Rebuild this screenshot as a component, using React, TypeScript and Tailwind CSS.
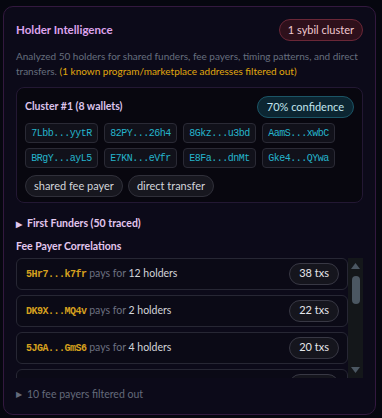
import React from "react";

const wallets = [
  "7Lbb...yytR", "82PY...26h4", "8Gkz...u3bd", "AamS...xwbC",
  "BRgY...ayL5", "E7KN...eVfr", "E8Fa...dnMt", "Gke4...QYwa",
];

const payers = [
  { addr: "5Hr7...k7fr", holders: 12, txs: 38 },
  { addr: "DK9X...MQ4v", holders: 2, txs: 22 },
  { addr: "5JGA...GmS6", holders: 4, txs: 20 },
  { addr: "9xQe...T2pL", holders: 3, txs: 14 },
];

const mono = { fontFamily: '"Liberation Mono", "DejaVu Sans Mono", monospace' };

function FakeScrollbar() {
  return (
    <div className="flex h-[120px] w-[15px] shrink-0 flex-col items-center bg-[#14171a]">
      <svg width="9" height="6" viewBox="0 0 9 6" className="mt-[5px]"><path d="M0 6 L4.5 0 L9 6 Z" fill="#4b5762" /></svg>
      <div className="mt-[7px] h-[28px] w-[8px] rounded-full bg-[#4b5762]" />
      <div className="flex-1" />
      <svg width="9" height="6" viewBox="0 0 9 6" className="mb-[5px]"><path d="M0 0 L9 0 L4.5 6 Z" fill="#4b5762" /></svg>
    </div>
  );
}

export default function App() {
  return (
    <div className="min-h-[418px] w-[382px] bg-[#06070f] pt-[6px] pl-[3px]" style={{ fontFamily: 'Lato, "Noto Sans", sans-serif' }}>
      <div className="w-[373px] rounded-[10px] border border-[#33193f] bg-[#0c0a19] px-3 pt-3 pb-[12px]">
        <div className="flex h-[22px] items-center justify-between">
          <h2 className="text-[11.5px] font-bold text-[#dda3ec]">Holder Intelligence</h2>
          <span className="flex h-[22px] items-center rounded-full border border-[#6a2737] bg-[#2e101b] px-[8px] text-[11px] text-[#f1c9d0]">1 sybil cluster</span>
        </div>

        <p className="mt-[8px] text-[10px] leading-[15px] text-[#666e7e]">
          Analyzed 50 holders for shared funders, fee payers, timing patterns, and direct transfers.{" "}
          <span className="text-[#e0a80e]">(1 known program/marketplace addresses filtered out)</span>
        </p>

        <div className="mt-[8px] rounded-[8px] border border-[#231833] bg-[#08070f] px-2 pt-2 pb-[5px]">
          <div className="flex items-center justify-between">
            <span className="text-[10.5px] font-bold text-[#dcc3eb]">Cluster #1 (8 wallets)</span>
            <span className="flex h-[22px] items-center rounded-full border border-[#1b5566] bg-[#0c2632] px-[9px] text-[11px] text-[#c3e6ef]">70% confidence</span>
          </div>
          <div className="mt-[5px] grid grid-cols-[repeat(4,max-content)] gap-x-[6px] gap-y-[5px]">
            {wallets.map(w => (
              <span key={w} className="flex h-[20px] w-[73px] items-center justify-center rounded-[4px] border border-[#2a2a35] bg-[#11111a] text-[10px] tracking-[-0.5px] text-[#25b4cc]" style={mono}>{w}</span>
            ))}
          </div>
          <div className="mt-[7px] flex gap-[5px]">
            {["shared fee payer", "direct transfer"].map(t => (
              <span key={t} className="flex h-[22px] items-center rounded-full border border-[#30303a] bg-[#17171f] px-[8px] text-[11px] text-[#d3d5db]">{t}</span>
            ))}
          </div>
        </div>

        <div className="mt-[13px] flex items-center gap-[5px] text-[10.5px] font-bold text-[#e3c7ef]">
          <span className="text-[8px]">▶</span>
          <span>First Funders (50 traced)</span>
        </div>

        <h3 className="mt-[7px] text-[10.5px] font-bold text-[#e3c7ef]">Fee Payer Correlations</h3>

        <div className="mt-[3px] flex">
          <div className="h-[120px] flex-1 overflow-hidden">
            <div className="flex flex-col gap-[5px]">
              {payers.map(p => (
                <div key={p.addr} className="flex h-[32px] items-center justify-between rounded-[6px] border border-[#272734] bg-[#0b0a16] pl-[9px] pr-[8px]">
                  <span className="text-[10.5px]">
                    <span className="text-[10px] font-bold tracking-[-0.5px] text-[#d7a11e]" style={mono}>{p.addr}</span>
                    <span className="text-[#6b7080]"> pays for </span>
                    <span className="text-[#d3d5db]">{p.holders} holders</span>
                  </span>
                  <span className="flex h-[22px] items-center rounded-full border border-[#383844] bg-[#15151d] px-[9px] text-[11px] text-[#e4e5ea]">{p.txs} txs</span>
                </div>
              ))}
            </div>
          </div>
          <FakeScrollbar />
        </div>

        <div className="mt-[9px] flex items-center gap-[5px] text-[10.5px] text-[#646b7b]">
          <span className="text-[8px]">▶</span>
          <span>10 fee payers filtered out</span>
        </div>
      </div>
    </div>
  );
}
